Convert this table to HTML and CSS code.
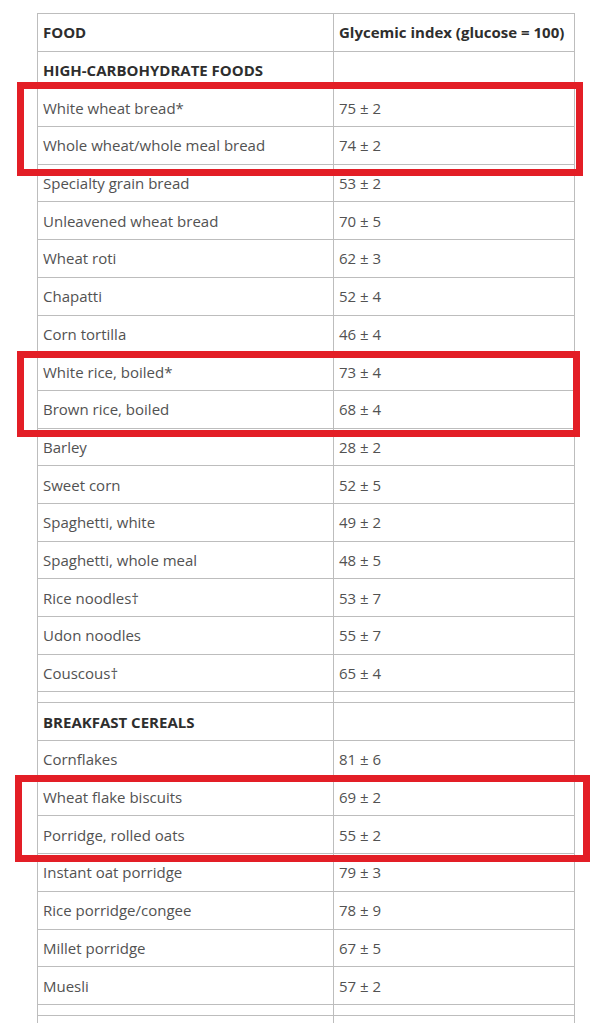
FILE: index.html
```html
<!DOCTYPE html>
<html lang="en">
<head>
<meta charset="utf-8">
<title>Glycemic index</title>
<link rel="stylesheet" href="styles.css">
</head>
<body>
<div class="page">
  <table class="gi-table">
    <colgroup><col class="c-food"><col class="c-gi"></colgroup>
    <tr class="head"><th>FOOD</th><th>Glycemic index (glucose = 100)</th></tr>
    <tr class="group"><td>HIGH-CARBOHYDRATE FOODS</td><td></td></tr>
    <tr><td>White wheat bread*</td><td>75 ± 2</td></tr>
    <tr><td>Whole wheat/whole meal bread</td><td>74 ± 2</td></tr>
    <tr><td>Specialty grain bread</td><td>53 ± 2</td></tr>
    <tr><td>Unleavened wheat bread</td><td>70 ± 5</td></tr>
    <tr><td>Wheat roti</td><td>62 ± 3</td></tr>
    <tr><td>Chapatti</td><td>52 ± 4</td></tr>
    <tr><td>Corn tortilla</td><td>46 ± 4</td></tr>
    <tr><td>White rice, boiled*</td><td>73 ± 4</td></tr>
    <tr><td>Brown rice, boiled</td><td>68 ± 4</td></tr>
    <tr><td>Barley</td><td>28 ± 2</td></tr>
    <tr><td>Sweet corn</td><td>52 ± 5</td></tr>
    <tr><td>Spaghetti, white</td><td>49 ± 2</td></tr>
    <tr><td>Spaghetti, whole meal</td><td>48 ± 5</td></tr>
    <tr><td>Rice noodles†</td><td>53 ± 7</td></tr>
    <tr><td>Udon noodles</td><td>55 ± 7</td></tr>
    <tr><td>Couscous†</td><td>65 ± 4</td></tr>
    <tr class="spacer"><td></td><td></td></tr>
    <tr class="group"><td>BREAKFAST CEREALS</td><td></td></tr>
    <tr><td>Cornflakes</td><td>81 ± 6</td></tr>
    <tr><td>Wheat flake biscuits</td><td>69 ± 2</td></tr>
    <tr><td>Porridge, rolled oats</td><td>55 ± 2</td></tr>
    <tr><td>Instant oat porridge</td><td>79 ± 3</td></tr>
    <tr><td>Rice porridge/congee</td><td>78 ± 9</td></tr>
    <tr><td>Millet porridge</td><td>67 ± 5</td></tr>
    <tr><td>Muesli</td><td>57 ± 2</td></tr>
    <tr class="spacer"><td></td><td></td></tr>
    <tr><td>&nbsp;</td><td>&nbsp;</td></tr>
  </table>
  <div class="mark mark-1"></div>
  <div class="mark mark-2"></div>
  <div class="mark mark-3"></div>
</div>
</body>
</html>
```

FILE: styles.css
```css
html, body {
  margin: 0;
  padding: 0;
  background: #ffffff;
}

.page {
  position: relative;
  padding: 13px 0 0 37px;
  height: 1023px;
  box-sizing: border-box;
  overflow: hidden;
}

.gi-table {
  border-collapse: collapse;
  width: 537px;
  table-layout: fixed;
  font-family: "Open Sans", "Noto Sans", sans-serif;
  font-size: 15px;
  color: #525252;
}

.c-food { width: 296px; }
.c-gi { width: 241px; }

.gi-table th,
.gi-table td {
  border: 1px solid #bdbdbd;
  padding: 0 5px;
  text-align: left;
  vertical-align: middle;
  white-space: nowrap;
  font-weight: 400;
}

.gi-table tr { height: 37.7px; }

.gi-table .head th,
.gi-table .group td {
  font-weight: 700;
  color: #2e2e2e;
}

.gi-table .spacer { height: 11px; }
.gi-table .spacer td { padding: 0; height: 10px; }

.mark {
  position: absolute;
  border: 7px solid #e31e26;
  box-sizing: border-box;
}

.mark-1 { left: 17px; top: 82px; width: 566px; height: 94px; }
.mark-2 { left: 17px; top: 351px; width: 563px; height: 86px; }
.mark-3 { left: 15px; top: 775px; width: 575px; height: 87px; }
```
